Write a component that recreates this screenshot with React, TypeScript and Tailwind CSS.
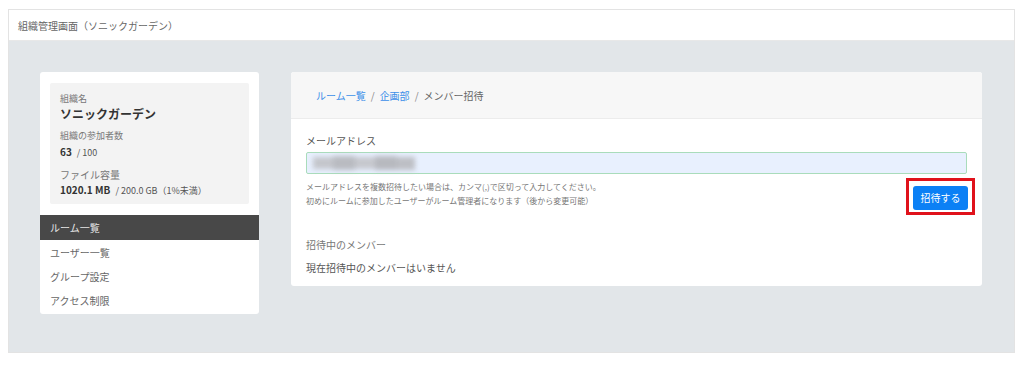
const font = { fontFamily: '"Noto Sans CJK JP", "Noto Sans", sans-serif' };

export default function App() {
  const navItems = ['ルーム一覧', 'ユーザー一覧', 'グループ設定', 'アクセス制限'];

  return (
    <div className="h-[369px] bg-white pt-[9px] pl-[8px] pr-[9px]" style={font}>
      <div className="flex flex-col border border-[#e3e3e3] h-[344px]">
        {/* Header */}
        <div className="h-[31px] shrink-0 bg-white border-b border-[#e8e8e8] px-[9px] flex items-center text-[10px] text-[#666]">
          組織管理画面（ソニックガーデン）
        </div>

        {/* Body */}
        <div className="flex-1 bg-[#e2e6e9] flex items-start pt-[31px] pl-[31px]">
          {/* Left: org info + nav */}
          <div className="w-[219px] bg-white rounded-[3px] pt-[11px] pb-[2px]">
            <div className="mx-[10px] h-[121px] bg-[#f3f3f3] rounded-[2px] px-[10px] pt-[9px] text-[#555]">
              <div className="text-[9px] leading-[14px] text-[#777]">組織名</div>
              <div className="text-[12px] leading-[16px] font-bold text-[#333]">ソニックガーデン</div>
              <div className="text-[9px] leading-[14px] text-[#777] mt-[7px]">組織の参加者数</div>
              <div className="text-[9px] leading-[16px] text-[#555] mt-[1px]">
                <span className="text-[10px] font-bold text-[#333]">63</span>
                <span className="ml-[5px]">/ 100</span>
              </div>
              <div className="text-[10px] leading-[14px] text-[#777] mt-[7px]">ファイル容量</div>
              <div className="text-[9px] leading-[16px] text-[#555]">
                <span className="text-[10px] font-bold text-[#333]">1020.1 MB</span>
                <span className="ml-[5px]">/ 200.0 GB（1%未満）</span>
              </div>
            </div>

            <nav className="mt-[11px] flex flex-col">
              {navItems.map((item, i) => (
                <div
                  key={item}
                  className={`px-[10px] flex items-center text-[10px] ${
                    i === 0 ? 'h-[25px] bg-[#484848] text-[#e6e6e6]' : 'h-[24px] text-[#666]'
                  }`}
                >
                  {item}
                </div>
              ))}
            </nav>
          </div>

          {/* Right: invite form */}
          <div className="ml-[32px] w-[691px] bg-white rounded-[3px] overflow-hidden">
            <div className="h-[47px] bg-[#f7f7f7] border-b border-[#ececec] pl-[25px] flex items-center text-[10px] text-[#666]">
              <span className="text-[#3c8fe9]">ルーム一覧</span>
              <span className="mx-[5px] text-[#888]">/</span>
              <span className="text-[#3c8fe9]">企画部</span>
              <span className="mx-[5px] text-[#888]">/</span>
              <span>メンバー招待</span>
            </div>

            <div className="px-[15px] pt-[15px] pb-[11px]">
              <div className="text-[10px] leading-[14px] text-[#555]">メールアドレス</div>
              <div className="mt-[4px] h-[22px] border border-[#a9dcbb] bg-[#e8f0fe] rounded-[2px] flex items-center pl-[6px]">
                <div className="flex items-center blur-[2.5px]">
                  <div className="h-[12px] w-[20px] bg-[#c4c6cc]" />
                  <div className="h-[14px] w-[22px] bg-[#b9bbc1]" />
                  <div className="h-[12px] w-[20px] bg-[#c6c8ce]" />
                  <div className="h-[14px] w-[22px] bg-[#b7b9bf]" />
                  <div className="h-[13px] w-[18px] bg-[#bdbfc5]" />
                </div>
              </div>

              <div className="mt-[4px] flex justify-between items-start">
                <div className="pt-[2px] text-[8px] leading-[14px] text-[#777]">
                  <div>メールアドレスを複数招待したい場合は、カンマ(,)で区切って入力してください。</div>
                  <div>初めにルームに参加したユーザーがルーム管理者になります（後から変更可能）</div>
                </div>
                <div className="-mr-[8px] border-[3px] border-[#e0121b] px-[4px] py-[2px]">
                  <button className="h-[24px] w-[55px] bg-[#0b80f5] rounded-[3px] text-white text-[10px]">
                    招待する
                  </button>
                </div>
              </div>

              <div className="mt-[23px] text-[10px] leading-[14px] text-[#777]">招待中のメンバー</div>
              <div className="mt-[9px] text-[10px] leading-[14px] text-[#555]">現在招待中のメンバーはいません</div>
            </div>
          </div>
        </div>
      </div>
    </div>
  );
}
